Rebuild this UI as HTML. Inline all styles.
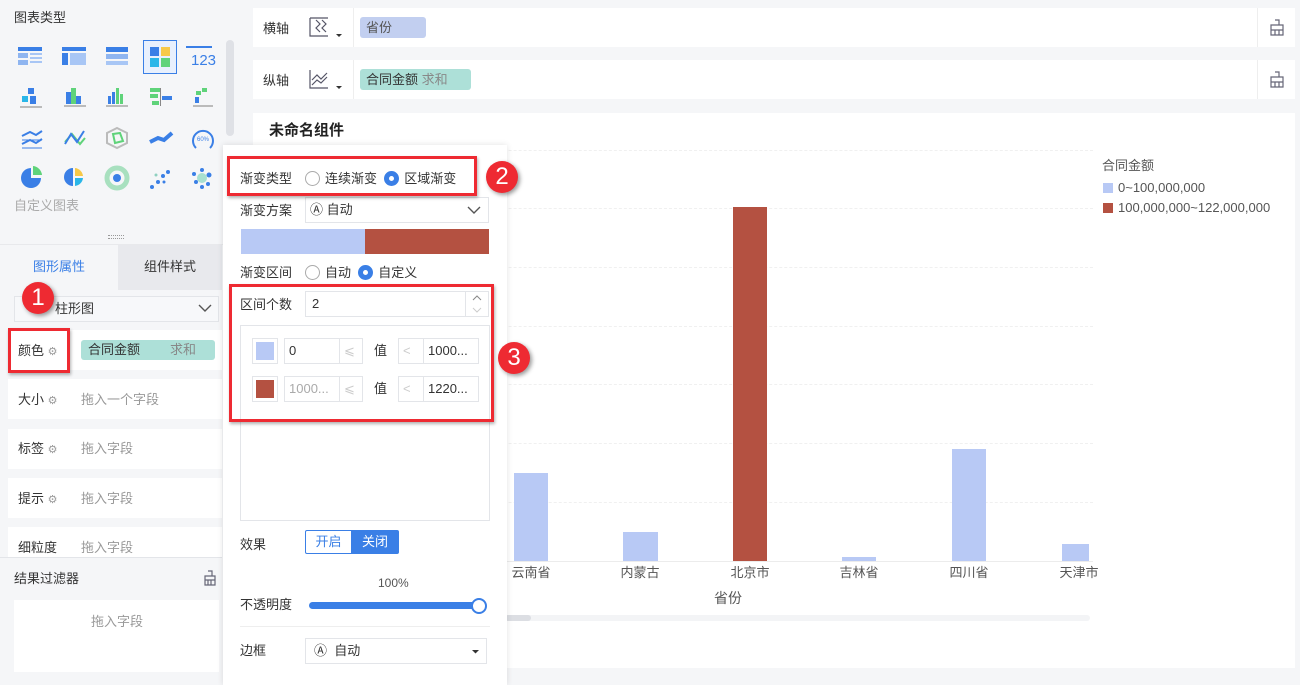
<!DOCTYPE html>
<html><head><meta charset="utf-8"><style>
*{margin:0;padding:0;box-sizing:border-box}
body{width:1300px;height:679px;overflow:hidden;background:#f5f6f8;font-family:"Liberation Sans","Noto Sans CJK SC",sans-serif;font-size:13px;line-height:16px;color:#333;position:relative}
.a{position:absolute}
.t{color:#333}
.g{color:#999}
.w{background:#fff}
.badge{position:absolute;width:32px;height:32px;border-radius:50%;background:#ee2a32;color:#fff;font-size:24px;line-height:32px;text-align:center;box-shadow:2px 2px 4px rgba(0,0,0,.4);font-family:"Liberation Sans",sans-serif}
.red{position:absolute;border:3px solid #ee2a32;box-shadow:1px 2px 3px rgba(0,0,0,.3)}
.radio{display:inline-block;width:15px;height:15px;border-radius:50%;border:1px solid #aaa;vertical-align:-3px;margin-right:5px;background:#fff}
.radio.on{border:5px solid #3a7fe6}
.inp{position:absolute;border:1px solid #e3e5e9;background:#fff;font-size:13px;padding-left:4px;line-height:24px;height:26px}
.grid{position:absolute;left:253px;width:840px;border-top:1px dashed #f0f0f0}
.bar{position:absolute;background:#b8c9f5}
.lbl{position:absolute;top:565px;font-size:13px;color:#555;width:60px;text-align:center}
</style></head><body>

<div class="a" style="left:0;top:0;width:236px;height:679px;background:#f5f6f8"></div>
<div class="a t" style="left:14px;top:10px;font-size:13px">图表类型</div>
<div class="a" style="left:226px;top:40px;width:8px;height:96px;background:#dfe1e6;border-radius:4px"></div>
<svg class="a" style="left:0;top:30px" width="225" height="170">
<g fill="#3a7fe6">
<rect x="18" y="17" width="24" height="4"/><rect x="18" y="23" width="10" height="5" fill="#8fb5f0"/><rect x="30" y="23" width="12" height="2" fill="#a8c6f5"/><rect x="30" y="27" width="12" height="2" fill="#a8c6f5"/><rect x="18" y="30" width="10" height="5" fill="#8fb5f0"/><rect x="30" y="31" width="12" height="2" fill="#a8c6f5"/>
<rect x="62" y="17" width="24" height="4"/><rect x="62" y="23" width="6" height="12"/><rect x="70" y="23" width="16" height="12" fill="#a8c6f5"/>
<rect x="106" y="17" width="22" height="5"/><rect x="106" y="24" width="22" height="5" fill="#8fb5f0"/><rect x="106" y="31" width="22" height="4" fill="#a8c6f5"/>
<rect x="186" y="16" width="26" height="2"/>
</g>
<rect x="143.5" y="10.5" width="33" height="33" fill="#e8f0fd" stroke="#3a7fe6"/>
<rect x="150" y="17" width="9" height="9" fill="#3a7fe6"/><rect x="161" y="17" width="9" height="9" fill="#f7c948"/><rect x="150" y="28" width="9" height="9" fill="#2ab6e8"/><rect x="161" y="28" width="9" height="9" fill="#5fd37a"/>
<text x="191" y="35" font-size="15" fill="#3a7fe6" font-family="Liberation Sans">123</text>
<g fill="#3a7fe6">
<rect x="28" y="58" width="6" height="6"/><rect x="22" y="66" width="6" height="6" fill="#2ab6e8"/><rect x="30" y="66" width="6" height="8"/><rect x="20" y="76" width="22" height="2" fill="#bbb"/>
<rect x="66" y="62" width="5" height="12"/><rect x="71" y="58" width="5" height="16" fill="#5fd37a"/><rect x="76" y="66" width="5" height="8"/><rect x="64" y="75" width="22" height="2" fill="#bbb"/>
<rect x="108" y="66" width="3" height="8"/><rect x="112" y="62" width="3" height="12"/><rect x="116" y="58" width="3" height="16" fill="#5fd37a"/><rect x="120" y="64" width="3" height="10" fill="#5fd37a"/><rect x="106" y="75" width="22" height="2" fill="#bbb"/>
<rect x="150" y="58" width="10" height="4" fill="#5fd37a"/><rect x="160" y="58" width="1" height="18" fill="#888"/><rect x="150" y="64" width="8" height="4" fill="#5fd37a"/><rect x="162" y="66" width="10" height="4"/><rect x="152" y="71" width="7" height="4" fill="#5fd37a"/>
<rect x="196" y="61" width="5" height="4" fill="#5fd37a"/><rect x="202" y="58" width="5" height="4" fill="#5fd37a"/><rect x="195" y="67" width="4" height="6"/><rect x="193" y="75" width="20" height="2" fill="#bbb"/>
</g>
<g fill="none" stroke-width="2">
<path d="M22 106l8-4 6 3 6-4M22 114l8-4 6 3 6-4" stroke="#3a7fe6"/><path d="M22 118h20M22 110h20" stroke="#3a7fe6" stroke-width="1"/>
<path d="M65 112l7-8 8 10 5-6" stroke="#5fd37a"/><path d="M65 114l6-10 6 8 7-11" stroke="#3a7fe6"/>
<path d="M117 98l10 5v10l-10 5-10-5v-10z" stroke="#bbb"/><path d="M113 104l7-1 3 8-8 2z" stroke="#5fd37a"/>
<path d="M150 112l8-4 6 2 8-7" stroke="#3a7fe6" stroke-width="4"/>
<path d="M196 118a10 10 0 1 1 14 0" stroke="#3a7fe6"/>
</g>
<text x="197" y="111" font-size="6" fill="#3a7fe6">60%</text>
<path d="M31 138v10h10a10 10 0 1 1-10-10z" fill="#3a7fe6"/><path d="M33 136a10 10 0 0 1 9 9h-9z" fill="#5fd37a"/>
<path d="M73 138a9 9 0 0 0 0 18z" fill="#3a7fe6"/><path d="M75 138a9 9 0 0 1 8 8h-8z" fill="#f7c948"/><path d="M75 148h8a9 9 0 0 1-8 8z" fill="#2ab6e8"/>
<circle cx="117" cy="148" r="10" fill="none" stroke="#a8e0bf" stroke-width="5"/><circle cx="117" cy="148" r="4" fill="#3a7fe6"/>
<g fill="#3a7fe6"><circle cx="152" cy="157" r="2"/><circle cx="158" cy="152" r="2"/><circle cx="163" cy="146" r="2"/><circle cx="168" cy="142" r="2"/><circle cx="164" cy="152" r="1.5"/><circle cx="156" cy="145" r="1.5" fill="#8fd0c0"/>
<circle cx="202" cy="148" r="5" fill="#a8e0d0"/><circle cx="194" cy="144" r="2"/><circle cx="196" cy="152" r="2"/><circle cx="202" cy="140" r="2"/><circle cx="209" cy="145" r="2.5"/><circle cx="208" cy="154" r="2"/><circle cx="202" cy="157" r="2"/></g>
</svg>
<div class="a" style="left:14px;top:198px;color:#aaa">自定义图表</div>
<div class="a" style="left:108px;top:235px;width:16px;height:4px;border-top:1px dotted #999;border-bottom:1px dotted #999"></div>
<div class="a" style="left:0;top:244px;width:236px;height:1px;background:#e8e9ec"></div>
<div class="a" style="left:0;top:245px;width:118px;height:45px;color:#3a7fe6;text-align:center;line-height:43px">图形属性</div>
<div class="a" style="left:118px;top:245px;width:104px;height:45px;background:#e8e9ed;text-align:center;line-height:43px;color:#333">组件样式</div>
<div class="a" style="left:14px;top:296px;width:205px;height:26px;border:1px solid #e3e5e9;background:#f7f8fa;padding-left:40px;line-height:24px">柱形图</div>
<svg class="a" style="left:198px;top:303px" width="14" height="10"><path d="M1 2l6 6 6-6" fill="none" stroke="#555" stroke-width="1.4"/></svg>
<div class="a w" style="left:8px;top:330px;width:214px;height:40px"></div>
<div class="a t" style="left:18px;top:343px">颜色 <span class="g" style="font-size:11px">⚙</span></div>
<div class="a" style="left:81px;top:340px;width:134px;height:20px;background:#ade0d8;border-radius:3px;line-height:20px;padding-left:7px">合同金额<span style="color:#888;margin-left:30px">求和</span></div>
<div class="a w" style="left:8px;top:379px;width:214px;height:40px"></div>
<div class="a t" style="left:18px;top:392px">大小 <span class="g" style="font-size:11px">⚙</span></div><div class="a g" style="left:81px;top:392px">拖入一个字段</div>
<div class="a w" style="left:8px;top:429px;width:214px;height:40px"></div>
<div class="a t" style="left:18px;top:441px">标签 <span class="g" style="font-size:11px">⚙</span></div><div class="a g" style="left:81px;top:441px">拖入字段</div>
<div class="a w" style="left:8px;top:478px;width:214px;height:40px"></div>
<div class="a t" style="left:18px;top:491px">提示 <span class="g" style="font-size:11px">⚙</span></div><div class="a g" style="left:81px;top:491px">拖入字段</div>
<div class="a w" style="left:8px;top:527px;width:214px;height:30px"></div>
<div class="a t" style="left:18px;top:540px">细粒度</div><div class="a g" style="left:81px;top:540px">拖入字段</div>
<div class="a" style="left:0;top:557px;width:222px;height:1px;background:#e3e5e9"></div>
<div class="a t" style="left:14px;top:571px">结果过滤器</div>
<svg class="a" style="left:202px;top:570px" width="16" height="16"><path d="M6 1h4v5M3 6h10v9H3zM3 10h10M6 10v5M9 10v5" fill="none" stroke="#667" stroke-width="1.2"/></svg>
<div class="a w" style="left:14px;top:600px;width:205px;height:72px"></div>
<div class="a g" style="left:91px;top:614px">拖入字段</div>
<div class="red" style="left:8px;top:328px;width:62px;height:45px"></div>
<div class="badge" style="left:22px;top:282px">1</div>

<div class="a w" style="left:253px;top:8px;width:1042px;height:39px"></div>
<div class="a w" style="left:253px;top:60px;width:1042px;height:39px"></div>
<div class="a" style="left:353px;top:8px;width:1px;height:39px;background:#eee"></div>
<div class="a" style="left:353px;top:60px;width:1px;height:39px;background:#eee"></div>
<div class="a" style="left:1257px;top:8px;width:1px;height:39px;background:#eee"></div>
<div class="a" style="left:1257px;top:60px;width:1px;height:39px;background:#eee"></div>
<div class="a t" style="left:263px;top:21px">横轴</div>
<div class="a t" style="left:263px;top:73px">纵轴</div>
<svg class="a" style="left:308px;top:16px" width="40" height="24"><path d="M2 2v18h18M8 4l4 4-4 4 4 4M14 4l4 4-4 4 4 4M2 2h18" fill="none" stroke="#556" stroke-width="1.2"/><path d="M28 18h6l-3 3z" fill="#333"/></svg>
<svg class="a" style="left:308px;top:68px" width="40" height="24"><path d="M2 2v18h18M4 12l5-5 4 4 6-6M4 17l5-5 4 3 6-6" fill="none" stroke="#556" stroke-width="1.2"/><path d="M28 18h6l-3 3z" fill="#333"/></svg>
<div class="a" style="left:360px;top:17px;width:66px;height:21px;background:#c2cff0;border-radius:3px;padding-left:6px;line-height:21px;color:#555">省份</div>
<div class="a" style="left:360px;top:69px;width:111px;height:21px;background:#ade0d8;border-radius:3px;padding-left:6px;line-height:21px">合同金额 <span style="color:#888">求和</span></div>
<svg class="a" style="left:1268px;top:19px" width="18" height="18"><path d="M7 1h4v5M3 6h12v10H3zM3 11h12M7 11v5M11 11v5" fill="none" stroke="#667" stroke-width="1.2"/></svg>
<svg class="a" style="left:1268px;top:71px" width="18" height="18"><path d="M7 1h4v5M3 6h12v10H3zM3 11h12M7 11v5M11 11v5" fill="none" stroke="#667" stroke-width="1.2"/></svg>

<div class="a w" style="left:253px;top:113px;width:1042px;height:555px"></div>
<div class="a" style="left:269px;top:122px;font-size:15px;line-height:18px;font-weight:bold;color:#222">未命名组件</div>
<div class="grid" style="top:150px"></div><div class="grid" style="top:208px"></div><div class="grid" style="top:267px"></div><div class="grid" style="top:326px"></div><div class="grid" style="top:384px"></div><div class="grid" style="top:443px"></div><div class="grid" style="top:502px"></div>
<div class="a" style="left:253px;top:561px;width:840px;height:1px;background:#ececec"></div>
<div class="bar" style="left:514px;top:473px;width:34px;height:88px"></div>
<div class="bar" style="left:623px;top:532px;width:35px;height:29px"></div>
<div class="bar" style="left:733px;top:207px;width:34px;height:354px;background:#b45141"></div>
<div class="bar" style="left:842px;top:557px;width:34px;height:4px"></div>
<div class="bar" style="left:952px;top:449px;width:34px;height:112px"></div>
<div class="bar" style="left:1062px;top:544px;width:27px;height:17px"></div>
<div class="lbl" style="left:501px">云南省</div><div class="lbl" style="left:610px">内蒙古</div><div class="lbl" style="left:720px">北京市</div><div class="lbl" style="left:829px">吉林省</div><div class="lbl" style="left:939px">四川省</div><div class="lbl" style="left:1049px">天津市</div>
<div class="a" style="left:714px;top:590px;font-size:14px;color:#555">省份</div>
<div class="a" style="left:505px;top:615px;width:585px;height:6px;background:#f3f4f6;border-radius:3px"></div>
<div class="a" style="left:505px;top:615px;width:26px;height:6px;background:#dcdee3;border-radius:3px"></div>
<div class="a" style="left:1102px;top:158px;color:#555">合同金额</div>
<div class="a" style="left:1103px;top:183px;width:10px;height:10px;background:#b8c9f5"></div>
<div class="a" style="left:1118px;top:180px;color:#555">0~100,000,000</div>
<div class="a" style="left:1103px;top:203px;width:10px;height:10px;background:#b45141"></div>
<div class="a" style="left:1118px;top:200px;color:#555">100,000,000~122,000,000</div>

<div class="a w" style="left:223px;top:145px;width:284px;height:540px;box-shadow:0 0 6px rgba(0,0,0,.12)"></div>
<div class="a t" style="left:240px;top:171px">渐变类型</div>
<div class="a t" style="left:305px;top:171px"><span class="radio"></span>连续渐变 &nbsp;<span class="radio on"></span>区域渐变</div>
<div class="a t" style="left:240px;top:203px">渐变方案</div>
<div class="inp" style="left:305px;top:197px;width:184px">Ⓐ 自动</div>
<svg class="a" style="left:467px;top:205px" width="14" height="10"><path d="M1 2l6 6 6-6" fill="none" stroke="#555" stroke-width="1.4"/></svg>
<div class="a" style="left:241px;top:229px;width:124px;height:25px;background:#b8c9f5"></div>
<div class="a" style="left:365px;top:229px;width:124px;height:25px;background:#b45141"></div>
<div class="a t" style="left:240px;top:265px">渐变区间</div>
<div class="a t" style="left:305px;top:265px"><span class="radio"></span>自动 &nbsp;<span class="radio on"></span>自定义</div>
<div class="a t" style="left:240px;top:297px">区间个数</div>
<div class="inp" style="left:305px;top:291px;width:184px;padding-left:6px">2</div>
<div class="a" style="left:465px;top:292px;width:1px;height:24px;background:#e3e5e9"></div>
<svg class="a" style="left:471px;top:294px" width="12" height="20"><path d="M2 6l4-4 4 4" fill="none" stroke="#888"/><path d="M2 14l4 4 4-4" fill="none" stroke="#ccc"/></svg>
<div class="a" style="left:240px;top:325px;width:250px;height:196px;border:1px solid #e3e5e9"></div>
<div class="inp" style="left:252px;top:338px;width:26px;padding:3px"><div style="width:18px;height:18px;background:#b8c9f5"></div></div>
<div class="inp" style="left:284px;top:338px;width:56px">0</div>
<div class="inp" style="left:339px;top:338px;width:24px;color:#ccc">⩽</div>
<div class="a t" style="left:374px;top:343px">值</div>
<div class="inp" style="left:398px;top:338px;width:26px;color:#ccc">&lt;</div>
<div class="inp" style="left:423px;top:338px;width:56px">1000...</div>
<div class="inp" style="left:252px;top:376px;width:26px;padding:3px"><div style="width:18px;height:18px;background:#b45141"></div></div>
<div class="inp" style="left:284px;top:376px;width:56px;color:#aaa">1000...</div>
<div class="inp" style="left:339px;top:376px;width:24px;color:#ccc">⩽</div>
<div class="a t" style="left:374px;top:381px">值</div>
<div class="inp" style="left:398px;top:376px;width:26px;color:#ccc">&lt;</div>
<div class="inp" style="left:423px;top:376px;width:56px">1220...</div>
<div class="a t" style="left:240px;top:537px">效果</div>
<div class="a" style="left:305px;top:530px;width:47px;height:24px;border:1px solid #3a7fe6;color:#3a7fe6;text-align:center;line-height:22px;border-radius:2px 0 0 2px">开启</div>
<div class="a" style="left:351px;top:530px;width:48px;height:24px;background:#3a7fe6;color:#fff;text-align:center;line-height:24px;border-radius:0 2px 2px 0">关闭</div>
<div class="a" style="left:378px;top:575px;color:#555;font-size:12px">100%</div>
<div class="a t" style="left:240px;top:597px">不透明度</div>
<div class="a" style="left:309px;top:602px;width:170px;height:7px;background:#3a7fe6;border-radius:4px"></div>
<div class="a" style="left:471px;top:598px;width:16px;height:16px;border-radius:50%;background:#fff;border:2px solid #3a7fe6"></div>
<div class="a" style="left:240px;top:626px;width:250px;height:1px;background:#eee"></div>
<div class="a t" style="left:240px;top:643px">边框</div>
<div class="inp" style="left:305px;top:638px;width:182px;padding-left:8px">Ⓐ &nbsp;自动</div>
<svg class="a" style="left:472px;top:649px" width="8" height="6"><path d="M0 1h7l-3.5 3.5z" fill="#333"/></svg>

<div class="red" style="left:227px;top:156px;width:250px;height:40px"></div>
<div class="red" style="left:229px;top:284px;width:265px;height:138px"></div>
<div class="badge" style="left:486px;top:161px">2</div>
<div class="badge" style="left:498px;top:342px">3</div>
</body></html>
